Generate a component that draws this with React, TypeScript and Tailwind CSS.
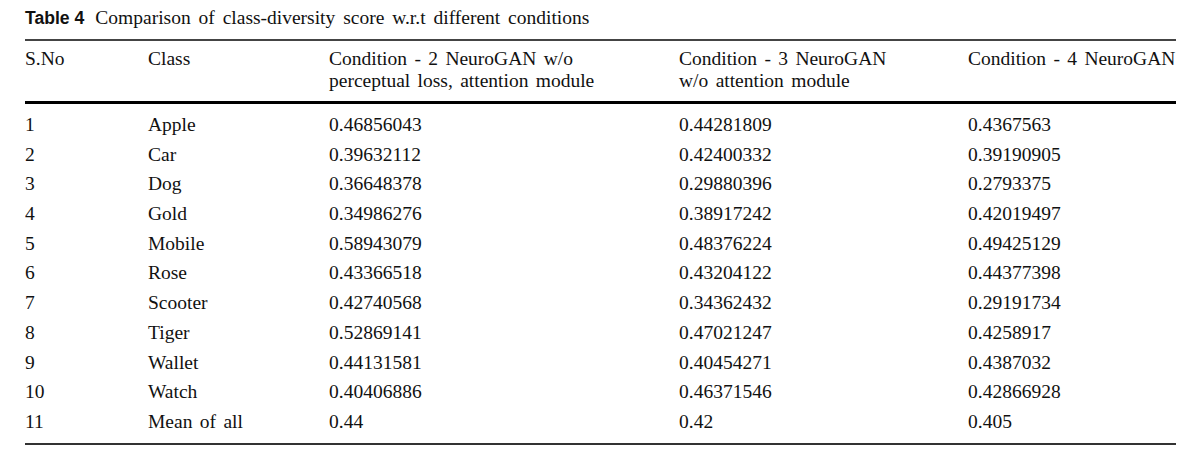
const rows = [
  ["1", "Apple", "0.46856043", "0.44281809", "0.4367563"],
  ["2", "Car", "0.39632112", "0.42400332", "0.39190905"],
  ["3", "Dog", "0.36648378", "0.29880396", "0.2793375"],
  ["4", "Gold", "0.34986276", "0.38917242", "0.42019497"],
  ["5", "Mobile", "0.58943079", "0.48376224", "0.49425129"],
  ["6", "Rose", "0.43366518", "0.43204122", "0.44377398"],
  ["7", "Scooter", "0.42740568", "0.34362432", "0.29191734"],
  ["8", "Tiger", "0.52869141", "0.47021247", "0.4258917"],
  ["9", "Wallet", "0.44131581", "0.40454271", "0.4387032"],
  ["10", "Watch", "0.40406886", "0.46371546", "0.42866928"],
  ["11", "Mean of all", "0.44", "0.42", "0.405"],
]

const serif = { fontFamily: '"Liberation Serif", "Times New Roman", serif' }

export default function App() {
  return (
    <div className="w-[1190px] h-[462px] bg-white text-[#111] pl-[25px] overflow-hidden" style={serif}>
      <div className="h-[39px] pt-[4px] flex items-baseline leading-[28px] whitespace-nowrap">
        <span
          className="font-bold text-[17.6px] mr-[11px]"
          style={{ fontFamily: '"Liberation Sans", Arial, sans-serif' }}
        >
          Table 4
        </span>
        <span className="text-[19.5px] [word-spacing:3px]">
          Comparison of class-diversity score w.r.t different conditions
        </span>
      </div>

      <div className="w-[1151px] overflow-hidden text-[19.5px] [word-spacing:2.5px]">
        <div className="h-[2px] bg-[#444]" />
        <div className="grid grid-cols-[123px_181px_350px_289px_1fr] pt-[7px] pb-[9px] leading-[22px] whitespace-nowrap">
          <div>S.No</div>
          <div>Class</div>
          <div>
            Condition - 2 NeuroGAN w/o
            <br />
            perceptual loss, attention module
          </div>
          <div>
            Condition - 3 NeuroGAN
            <br />
            w/o attention module
          </div>
          <div>Condition - 4 NeuroGAN</div>
        </div>
        <div className="h-[3px] bg-black" />
        <div className="pt-[6px] pb-[6px]">
          {rows.map((r) => (
            <div
              key={r[0]}
              className="grid grid-cols-[123px_181px_350px_289px_1fr] h-[29.7px] leading-[29.7px] whitespace-nowrap"
            >
              {r.map((c, i) => (
                <div key={i}>{c}</div>
              ))}
            </div>
          ))}
        </div>
        <div className="h-[2px] bg-[#333]" />
      </div>
    </div>
  )
}
